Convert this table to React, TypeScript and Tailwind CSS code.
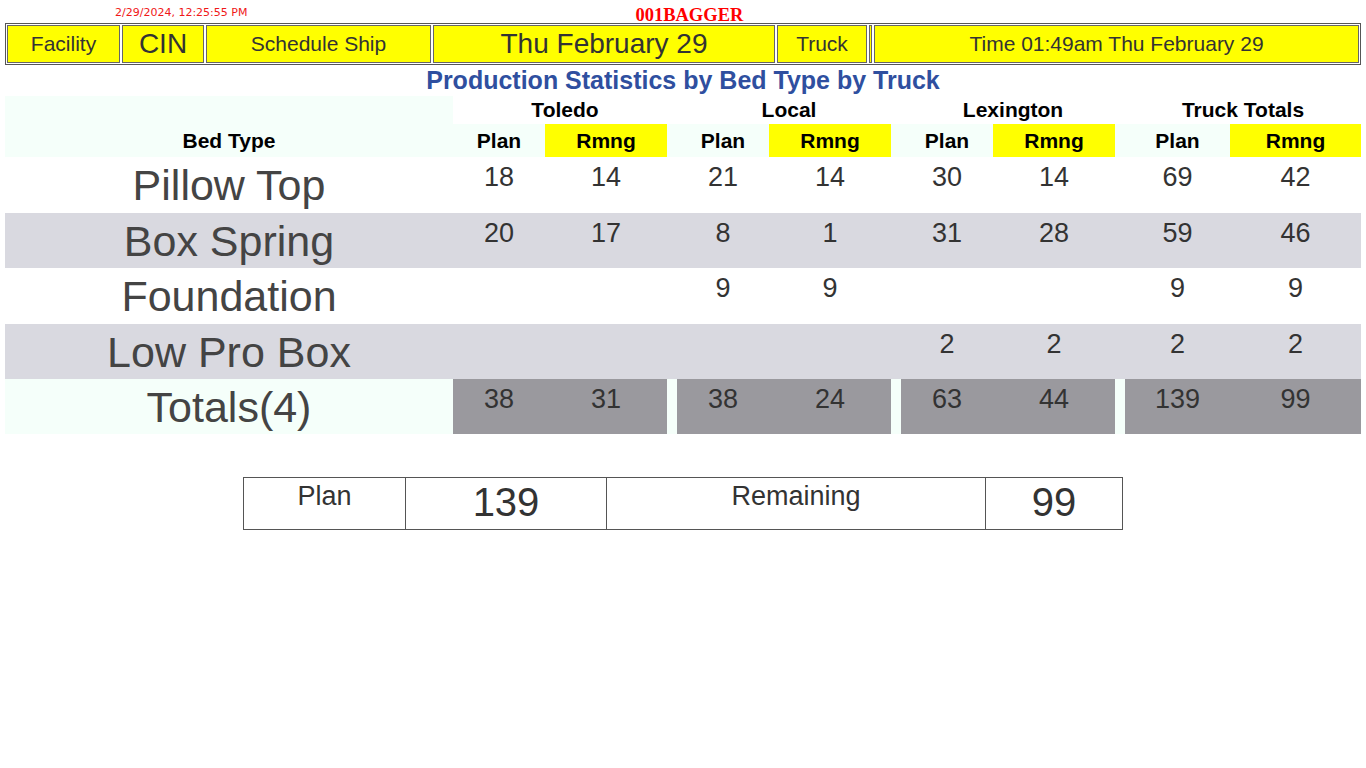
import React from "react";

type Row = { name: string; cells: (number | null)[]; shade: boolean };

const ROWS: Row[] = [
  { name: "Pillow Top", cells: [18, 14, 21, 14, 30, 14, 69, 42], shade: false },
  { name: "Box Spring", cells: [20, 17, 8, 1, 31, 28, 59, 46], shade: true },
  { name: "Foundation", cells: [null, null, 9, 9, null, null, 9, 9], shade: false },
  { name: "Low Pro Box", cells: [null, null, null, null, 2, 2, 2, 2], shade: true },
];

const TOTALS = [38, 31, 38, 24, 63, 44, 139, 99];
const GROUPS = ["Toledo", "Local", "Lexington", "Truck Totals"];
const FONT = { fontFamily: '"Liberation Sans", Arial, sans-serif' };

function HeaderCell({ children, className = "" }: { children?: React.ReactNode; className?: string }) {
  return (
    <div
      className={`h-[38px] shrink-0 bg-[#ffff00] border border-[#666] flex items-center justify-center text-[21px] text-[#333] ${className}`}
    >
      {children}
    </div>
  );
}

function NumCell({ value, className = "" }: { value: number | null; className?: string }) {
  return (
    <td className={`align-top text-center text-[27px] leading-[31px] pt-[5px] text-[#333] ${className}`}>
      {value ?? ""}
    </td>
  );
}

export default function App() {
  return (
    <div className="w-full min-h-screen bg-white px-[5px]" style={FONT}>
      {/* top line */}
      <div className="flex h-[23px]">
        <span
          className="pl-[110px] pt-[7px] text-[11px] leading-[12px] text-[#f01818]"
          style={{ fontFamily: '"DejaVu Sans", Verdana, sans-serif' }}
        >
          2/29/2024, 12:25:55 PM
        </span>
        <span
          className="ml-[388px] pt-[6px] text-[18.5px] leading-[18px] font-bold text-[#ff0000]"
          style={{ fontFamily: '"Liberation Serif", "Times New Roman", serif' }}
        >
          001BAGGER
        </span>
      </div>

      {/* header bar */}
      <div className="flex gap-[2px] border border-[#555] p-[1px] h-[42px]">
        <HeaderCell className="w-[113px]">Facility</HeaderCell>
        <HeaderCell className="w-[82px] text-[28px]">CIN</HeaderCell>
        <HeaderCell className="w-[225px]">Schedule Ship</HeaderCell>
        <HeaderCell className="w-[342px] text-[28px]">Thu February 29</HeaderCell>
        <HeaderCell className="w-[90px]">Truck</HeaderCell>
        <HeaderCell className="w-[3px]" />
        <HeaderCell className="flex-1">Time 01:49am Thu February 29</HeaderCell>
      </div>

      <div className="h-[31px] flex items-start justify-center pt-[1px] text-[25px] leading-[28px] font-bold text-[#2f4f9f]">
        Production Statistics by Bed Type by Truck
      </div>

      {/* stats table */}
      <table className="w-[1356px] table-fixed border-collapse">
        <colgroup>
          <col className="w-[448px]" />
          <col className="w-[92px]" />
          <col className="w-[122px]" />
          <col className="w-[10px]" />
          <col className="w-[92px]" />
          <col className="w-[122px]" />
          <col className="w-[10px]" />
          <col className="w-[92px]" />
          <col className="w-[122px]" />
          <col className="w-[10px]" />
          <col className="w-[105px]" />
          <col className="w-[131px]" />
        </colgroup>
        <thead>
          <tr className="h-[28px] leading-[24px]">
            <th className="bg-[#f5fffa]" />
            {GROUPS.map((g, i) => (
              <th
                key={g}
                colSpan={i < 3 ? 3 : 2}
                className="bg-white text-[21px] font-bold text-black text-center align-middle"
              >
                {g}
              </th>
            ))}
          </tr>
          <tr className="h-[33px] leading-[24px] bg-[#f5fffa] text-[21px] font-bold text-black">
            <th className="text-center align-middle">Bed Type</th>
            {GROUPS.map((g, i) => (
              <React.Fragment key={g}>
                <th className="text-center align-middle">Plan</th>
                <th className="text-center align-middle bg-[#ffff00]">Rmng</th>
                {i < 3 && <th />}
              </React.Fragment>
            ))}
          </tr>
        </thead>
        <tbody>
          {ROWS.map((r, ri) => (
            <tr key={r.name} className={`${ri % 2 === 0 ? "h-[56px]" : "h-[55px]"} ${r.shade ? "bg-[#d9d9e0]" : "bg-white"}`}>
              <td className="text-center align-middle text-[43px] leading-[48px] text-[#444]">{r.name}</td>
              {[0, 1, 2, 3].map((g) => (
                <React.Fragment key={g}>
                  <NumCell value={r.cells[g * 2]} />
                  <NumCell value={r.cells[g * 2 + 1]} />
                  {g < 3 && <td />}
                </React.Fragment>
              ))}
            </tr>
          ))}
          <tr className="h-[55px] bg-[#f5fffa]">
            <td className="text-center align-middle text-[43px] leading-[48px] text-[#444]">Totals(4)</td>
            {[0, 1, 2, 3].map((g) => (
              <React.Fragment key={g}>
                <NumCell value={TOTALS[g * 2]} className="bg-[#9a999e]" />
                <NumCell value={TOTALS[g * 2 + 1]} className="bg-[#9a999e]" />
                {g < 3 && <td />}
              </React.Fragment>
            ))}
          </tr>
        </tbody>
      </table>

      {/* plan / remaining summary */}
      <div className="flex justify-center mt-[43px]">
        <table className="w-[879px] table-fixed border-collapse border border-[#444] text-[#333]">
          <colgroup>
            <col className="w-[162px]" />
            <col className="w-[201px]" />
            <col className="w-[379px]" />
            <col className="w-[137px]" />
          </colgroup>
          <tbody>
            <tr className="h-[52px]">
              <td className="border border-[#555] align-top text-center text-[27px] leading-[31px] pt-[3px]">Plan</td>
              <td className="border border-[#555] align-top text-center text-[40px] leading-[46px] pt-[1px]">139</td>
              <td className="border border-[#555] align-top text-center text-[27px] leading-[31px] pt-[3px]">Remaining</td>
              <td className="border border-[#555] align-top text-center text-[40px] leading-[46px] pt-[1px]">99</td>
            </tr>
          </tbody>
        </table>
      </div>
    </div>
  );
}
